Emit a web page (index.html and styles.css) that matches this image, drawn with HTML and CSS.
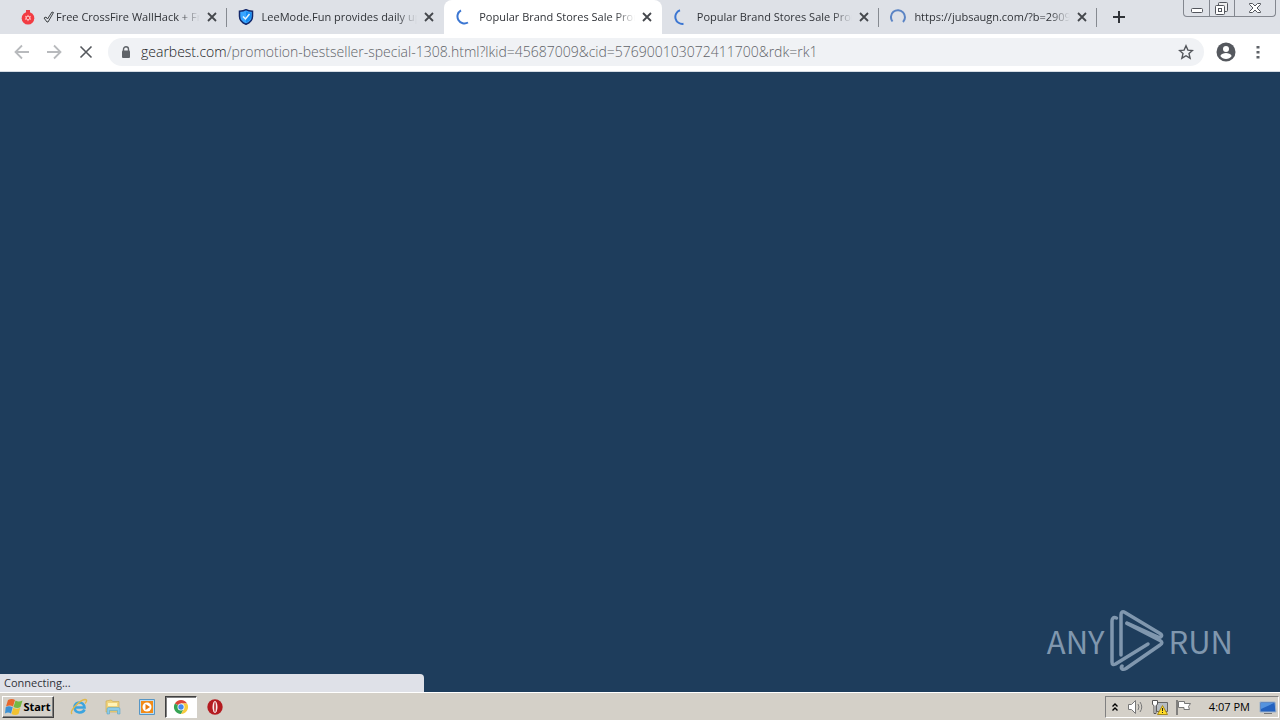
FILE: index.html
```html
<!DOCTYPE html>
<html lang="en">
<head>
<meta charset="utf-8">
<title>Popular Brand Stores Sale Promotion</title>
<link rel="stylesheet" href="styles.css">
</head>
<body>
<svg class="defs" aria-hidden="true">
  <symbol id="cross" viewBox="0 0 10 10"><path d="M1 1l8 8M9 1L1 9" fill="none" stroke="currentColor" stroke-width="1.8"/></symbol>
</svg>
<header class="strip">
  <div class="tabs">
    <div class="tab divided">
      <svg class="favicon" viewBox="0 0 16 16"><path d="M6 1h4v3H6z" fill="#e8404a"/><circle cx="8" cy="9.3" r="6.3" fill="#f23c43"/><path d="M8 5.5l1 1.7 2-.4-.6 2 .8 2-2-.2L8 12.500l-1.200-1.900-2 .2.800-2-.6-2 2 .4z" fill="#ffb5b5"/><path d="M7 8h2v2H7z" fill="#f23c43"/></svg>
      <svg class="tick" viewBox="0 0 11 12"><path d="M1 7l2-1 1.500 2L9 1l1.500.5L5 11H4z" fill="none" stroke="#3c4043"/></svg>
      <span class="title">Free CrossFire WallHack + Fr</span>
      <button class="close" aria-label="Close tab"><svg><use href="#cross"/></svg></button>
    </div>
    <div class="tab">
      <svg class="favicon" viewBox="0 0 16 16"><path d="M8 .7c2 1.200 4 1.500 6.500 1.600v5c0 4-2.500 6.500-6.500 8-4-1.500-6.500-4-6.500-8v-5C4 2.200 6 1.900 8 .7z" fill="#38a5ff" stroke="#13286b" stroke-width="1.500"/><path d="M8 2.500v11c3-1.500 5-3 5-6.500V3.500c-2 0-3.500-.3-5-1z" fill="#168bf0"/><path d="M5 7.500L7.500 10 11.500 5" fill="none" stroke="#e4f5ff" stroke-width="1.500"/></svg>
      <span class="title">LeeMode.Fun provides daily upd</span>
      <button class="close" aria-label="Close tab"><svg><use href="#cross"/></svg></button>
    </div>
    <div class="tab active">
      <svg class="favicon" viewBox="0 0 16 16"><path d="M6 1.300A7 7 0 0 0 13 13.500" fill="none" stroke="#3b76d2" stroke-width="2"/></svg>
      <span class="title">Popular Brand Stores Sale Promo</span>
      <button class="close" aria-label="Close tab"><svg><use href="#cross"/></svg></button>
    </div>
    <div class="tab divided">
      <svg class="favicon" viewBox="0 0 16 16"><path d="M7 1.300A7 7 0 0 0 10.500 14.800" fill="none" stroke="#3b76d2" stroke-width="2"/></svg>
      <span class="title">Popular Brand Stores Sale Promo</span>
      <button class="close" aria-label="Close tab"><svg><use href="#cross"/></svg></button>
    </div>
    <div class="tab divided">
      <svg class="favicon" viewBox="0 0 16 16"><path d="M2.500 12.500A7 7 0 1 1 13 13" fill="none" stroke="#5b84c4" stroke-width="2"/></svg>
      <span class="title">https://jubsaugn.com/?b=2909</span>
      <button class="close" aria-label="Close tab"><svg><use href="#cross"/></svg></button>
    </div>
  </div>
  <button class="newtab" aria-label="New tab"><svg viewBox="0 0 12 12"><path d="M6 0v12M0 6h12" stroke="#303338" stroke-width="2"/></svg></button>
  <div class="winctl">
    <button aria-label="Minimize"><svg viewBox="0 0 24 16"><rect x="6.500" y="8.500" width="11" height="4" rx="1" fill="#fff" stroke="#53565d"/></svg></button>
    <button aria-label="Restore"><svg viewBox="0 0 24 16"><rect x="8.500" y="2.500" width="9" height="9" rx="1" fill="#eee" stroke="#53565d"/><rect x="5.500" y="5.500" width="9" height="9" rx="1" fill="#fff" stroke="#53565d"/><rect x="8.500" y="8.500" width="3" height="3" fill="none" stroke="#53565d"/></svg></button>
    <button class="wide" aria-label="Close window"><svg viewBox="0 0 24 16"><path d="M6.500 3.500h3L12 6l2.500-2.500h3v1L14 8l3.500 3.500v1h-3L12 10l-2.500 2.500h-3v-1L10 8 6.500 4.500z" fill="#fff" stroke="#53565d"/></svg></button>
  </div>
</header>
<nav class="toolbar">
  <button aria-label="Back" disabled><svg viewBox="0 0 16 16"><path d="M15 8H2M8 1.500L1.500 8 8 14.500" fill="none" stroke="#b8babd" stroke-width="1.800"/></svg></button>
  <button aria-label="Forward" disabled><svg viewBox="0 0 16 16"><path d="M1 8h13M8 1.500L14.500 8 8 14.500" fill="none" stroke="#b8babd" stroke-width="1.800"/></svg></button>
  <button aria-label="Stop"><svg viewBox="0 0 16 16"><path d="M2.500 2.500l11 11M13.500 2.500l-11 11" stroke="#55585d" stroke-width="1.600"/></svg></button>
  <div class="omnibox">
    <svg class="lock" viewBox="0 0 10 12"><path d="M2.500 5V3.300a2.500 2.500 0 0 1 5 0V5" fill="none" stroke="#5f6368" stroke-width="1.400"/><rect x="1" y="4.500" width="8" height="7.500" rx="1" fill="#5f6368"/></svg>
    <a class="url" href="#"><b>gearbest.com</b>/promotion-bestseller-special-1308.html?lkid=45687009&amp;cid=576900103072411700&amp;rdk=rk1</a>
    <button class="star" aria-label="Bookmark this tab"><svg viewBox="0 0 16 16"><path d="M8 1.800l1.900 4.300 4.600.4-3.500 3.100 1.100 4.600L8 11.700l-4.100 2.500L5 9.600 1.500 6.500l4.600-.4z" fill="none" stroke="#53565b" stroke-width="1.400"/></svg></button>
  </div>
  <button class="profile" aria-label="Profile"><svg viewBox="0 0 20 20"><circle cx="10" cy="10" r="9.500" fill="#55585e"/><circle cx="10" cy="7" r="3" fill="#fff"/><path d="M4.300 14c1-2.200 3.500-3 5.700-3s4.700.8 5.700 3c-1.300 1.900-3.400 3-5.700 3s-4.400-1.100-5.700-3z" fill="#fff"/></svg></button>
  <button class="menu" aria-label="Menu"><svg viewBox="0 0 4 16"><path d="M.5 2h3v2.500h-3zM.5 7h3v2.500h-3zM.5 12h3v2.500h-3z" fill="#5f6368"/></svg></button>
</nav>
<main class="page">
  <div class="brand">
    <span>ANY</span>
    <svg viewBox="0 0 56 62"><g fill="none" stroke="#8097ae" stroke-width="3.500" stroke-linejoin="round" stroke-linecap="round"><path d="M7.500 8C4 6.500 3 9 3 11v41c0 3 1.500 3 3.500 2L39 34"/><path d="M12 45V5c0-3 1.500-4 4-2.500L51 23.500c3.500 2 .5 4.500-2 3.500L18 13"/><path d="M18 13.500L51 30.500c2.500 1.500 2.500 3 0 4.500L17 58.500c-3.500 2-6-.5-4-2.500"/></g></svg>
    <span>RUN</span>
  </div>
  <div class="status" role="status">Connecting...</div>
</main>
<footer class="taskbar">
  <button class="start"><svg viewBox="0 0 18 16"><path d="M3 1q4-2 7 0L8 7.500q-3-2-7 0z" fill="#e8672c"/><path d="M10.500 1.500q3 2 7 0L15.500 8q-3 2-7 0z" fill="#75b843"/><path d="M.7 8.300q3-2 7 0L6 14.500q-3-2-6 0z" fill="#3c91d4"/><path d="M8.300 8.800q3 2 7 0L13.500 15q-3 2-7 0z" fill="#f2c230"/></svg>Start</button>
  <button class="app" aria-label="Internet Explorer"><svg viewBox="0 0 18 18"><path d="M14.500 11.500C13 15.500 5 16 4.500 9.500 4.500 3 14 2.500 14.500 9.500H5" fill="none" stroke="#3ba4df" stroke-width="2.600"/><path d="M2 16C-1 13 10 2 15 1.500c3 0 1 3 0 4" fill="none" stroke="#e0b84b" stroke-width="1.400"/></svg></button>
  <button class="app" aria-label="Explorer"><svg viewBox="0 0 18 18"><path d="M2 3l5-1 2 1.500h6V14H2z" fill="#efd27b" stroke="#c9a94d" stroke-width=".6"/><path d="M4 5h9v3H4z" fill="#fff3b8"/><path d="M3 16V11q0-1.500 1.500-1.500h10q1.500 0 1.500 1.500v5h-2.500v-3.500h-8V16z" fill="#8ccbe8" stroke="#4e9ec5" stroke-width=".5"/></svg></button>
  <button class="app" aria-label="Media Player"><svg viewBox="0 0 18 18"><path d="M1.500 1.500h15v15h-15z" fill="#b9dcf4" stroke="#5796c5"/><path d="M3 3h12v12H3z" fill="#f28b18"/><circle cx="9" cy="9" r="4.500" fill="#fff"/><path d="M7.500 6L12 9l-4.500 3z" fill="#e87b10"/></svg></button>
  <button class="app current" aria-label="Chrome"><svg viewBox="0 0 18 18"><path d="M9 9L2.900 5.500A7 7 0 0 1 15.100 5.500H9z" fill="#dc4638"/><path d="M9 9L2.900 5.500A7 7 0 0 0 9 16l3-5.300z" fill="#37a454"/><path d="M9 5.500h6.100A7 7 0 0 1 9 16l3-5.300z" fill="#f7cb3d"/><circle cx="9" cy="9" r="3.500" fill="#fff"/><circle cx="9" cy="9" r="2.700" fill="#4689ee"/></svg></button>
  <button class="app" aria-label="Opera"><svg viewBox="0 0 18 18"><circle cx="9" cy="9" r="7.700" fill="#b41b20"/><ellipse cx="9" cy="9" rx="2.500" ry="6" fill="#fbeaea"/><ellipse cx="9" cy="9" rx="1" ry="5" fill="#c3474a"/></svg></button>
  <div class="tray">
    <svg class="chev" viewBox="0 0 8 10"><path d="M1.500 4.500L4 2l2.500 2.500M1.500 8.500L4 6l2.500 2.500" fill="none" stroke="#000" stroke-width="1.400"/></svg>
    <svg class="ico" viewBox="0 0 18 16"><path d="M1.500 5.500h3l4-4v13l-4-4h-3z" fill="#fff" stroke="#777"/><path d="M11 5q2 3 0 6M13 3q3.500 5 0 10" fill="none" stroke="#777"/></svg>
    <svg class="ico" viewBox="0 0 18 16"><path d="M5.500 3.500h11v9h-11z" fill="#b6bcc2" stroke="#666"/><path d="M1.500 1.500h5v4l-1.500 1v8h-2v-8l-1.500-1z" fill="#fff" stroke="#555"/><path d="M11.500 6.500l5 9h-10z" fill="#ffdc27" stroke="#a7891a"/><path d="M11.500 9v3m0 1v1" stroke="#222"/></svg>
    <svg class="ico" viewBox="0 0 18 16"><path d="M2 1v15" stroke="#666" stroke-width="1.500"/><path d="M3.500 2.500h6v2h6l-2 3 1 3H9v-2H3.500z" fill="#fff" stroke="#777"/></svg>
    <time>4:07 PM</time>
    <svg class="ico" viewBox="0 0 18 16"><path d="M1 3h15l1 10H1z" fill="#2462bf" stroke="#9db2cb"/><path d="M2 4h13L2 10z" fill="#5593de"/><path d="M5 14.500h8" stroke="#777"/></svg>
  </div>
</footer>
</body>
</html>
```
FILE: styles.css
```css
* { box-sizing: border-box; }
body {
  margin: 0;
  height: 100vh;
  display: flex;
  flex-direction: column;
  overflow: hidden;
  font: 11px/16px "Open Sans", "Noto Sans", sans-serif;
  color: #303338;
}
button {
  margin: 0;
  padding: 0;
  border: 0;
  background: none;
  font: inherit;
  color: inherit;
  display: flex;
  align-items: center;
  justify-content: center;
}
svg { display: block; flex: none; }
.defs { position: absolute; width: 0; height: 0; }

.strip { display: flex; height: 34px; flex: none; background: #dee1e7; }
.tabs { display: flex; flex: 0 1 1097px; min-width: 0; padding-left: 9px; }
.tab {
  flex: 1 1 0;
  min-width: 0;
  display: flex;
  align-items: center;
  padding: 0 7px 0 11px;
  position: relative;
}
.divided::after {
  content: "";
  position: absolute;
  right: 0;
  top: 8px;
  width: 1px;
  height: 19px;
  background: #868a91;
}
.active { background: #fff; border-radius: 8px 8px 0 0; }
.favicon { width: 16px; height: 16px; margin-right: 8px; }
.tick { width: 11px; height: 12px; margin: 0 2px 0 -1px; }
.title {
  flex: 1;
  min-width: 0;
  overflow: hidden;
  white-space: nowrap;
  -webkit-mask-image: linear-gradient(to right, #000 calc(100% - 20px), transparent);
  mask-image: linear-gradient(to right, #000 calc(100% - 20px), transparent);
}
.close { width: 16px; height: 16px; margin-left: 4px; color: #44474c; }
.close svg { width: 10px; height: 10px; }
.newtab { width: 44px; flex: none; }
.newtab svg { width: 12px; height: 12px; }
.winctl {
  display: flex;
  height: 17px;
  margin: 0 4px 0 auto;
  border: 1px solid #83878f;
  border-top: 0;
  border-radius: 0 0 4px 4px;
}
.winctl button { width: 25px; }
.winctl button + button { border-left: 1px solid #83878f; }
.winctl .wide { width: 41px; }
.winctl svg { width: 24px; height: 16px; }

.toolbar {
  display: flex;
  align-items: center;
  flex: none;
  height: 38px;
  padding: 0 6px 1px;
  background: #fff;
  border-bottom: 1px solid #d5dce4;
}
.toolbar > button { width: 32px; height: 32px; }
.toolbar > button svg { width: 16px; height: 16px; }
.omnibox {
  flex: 1;
  min-width: 0;
  display: flex;
  align-items: center;
  height: 28px;
  margin: 0 6px;
  padding: 0 10px 0 13px;
  border-radius: 14px;
  background: #f0f2f5;
}
.lock { width: 10px; height: 12px; margin-right: 10px; }
.url {
  flex: 1;
  min-width: 0;
  overflow: hidden;
  white-space: nowrap;
  font: 300 14px/20px "Open Sans", "Noto Sans", sans-serif;
  color: #5f6368;
  text-decoration: none;
}
.url b { font-weight: inherit; color: #202124; }
.star svg { width: 16px; height: 16px; }
.toolbar .profile svg { width: 20px; height: 20px; }
.toolbar .menu svg { width: 4px; }

.page { flex: 1; min-height: 0; position: relative; background: #1e3d5c; }
.brand {
  position: absolute;
  right: 47px;
  bottom: 20px;
  display: flex;
  align-items: center;
  gap: 4px;
  font: 31px/60px "Noto Sans CJK JP", "Liberation Sans", sans-serif;
  color: #8097ae;
}
.brand svg { width: 56px; height: 62px; }
.status {
  position: absolute;
  left: 0;
  bottom: 0;
  width: 424px;
  max-width: 100%;
  padding: 1px 4px;
  border-radius: 0 4px 0 0;
  background: #dfe1e8;
}

.taskbar {
  flex: none;
  display: flex;
  align-items: center;
  height: 28px;
  padding: 1px 1px 0 2px;
  background: #d4d0c8;
  border-top: 1px solid #fff;
  color: #000;
}
.start {
  width: 52px;
  height: 22px;
  margin-right: 7px;
  border: 1px solid;
  border-color: #fff #404040 #404040 #fff;
  box-shadow: inset -1px -1px #808080;
  font-weight: bold;
}
.start svg { width: 18px; height: 16px; }
.app { width: 32px; height: 22px; margin-left: 2px; }
.app svg { width: 18px; height: 18px; }
.current {
  background: #fff;
  border: 1px solid;
  border-color: #404040 #fff #fff #404040;
  box-shadow: inset 1px 1px #808080;
}
.tray {
  display: flex;
  align-items: center;
  height: 22px;
  margin-left: auto;
  padding: 0 1px 0 5px;
  border: 1px solid;
  border-color: #808080 #fff #fff #808080;
}
.chev { width: 8px; height: 10px; margin-right: 8px; }
.ico { width: 18px; height: 16px; margin-right: 6px; }
.ico:last-child { margin: 0; }
time { margin: 0 9px 0 10px; }
```
